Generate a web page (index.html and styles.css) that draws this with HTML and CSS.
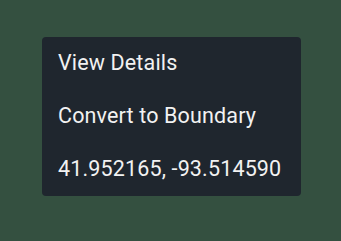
FILE: index.html
```html
<!DOCTYPE html>
<html>
<head>
<meta charset="utf-8">
<link rel="stylesheet" href="styles.css">
</head>
<body>
<div class="menu">
  <div class="item">View Details</div>
  <div class="item">Convert to Boundary</div>
  <div class="item">41.952165, -93.514590</div>
</div>
</body>
</html>
```
FILE: styles.css
```css
html, body {
  margin: 0;
  padding: 0;
}
body {
  background: #345040;
  width: 341px;
  height: 241px;
  padding: 37px 0 0 42px;
  box-sizing: border-box;
  font-family: Roboto, "Liberation Sans", sans-serif;
}
.menu {
  width: 259px;
  background: #1f262e;
  border-radius: 4px;
  display: flex;
  flex-direction: column;
}
.item {
  height: 53px;
  line-height: 51px;
  padding: 0 0 2px 16px;
  box-sizing: border-box;
  font-size: 21.5px;
  letter-spacing: 0.15px;
  color: #f2f2f2;
  white-space: nowrap;
}
```
